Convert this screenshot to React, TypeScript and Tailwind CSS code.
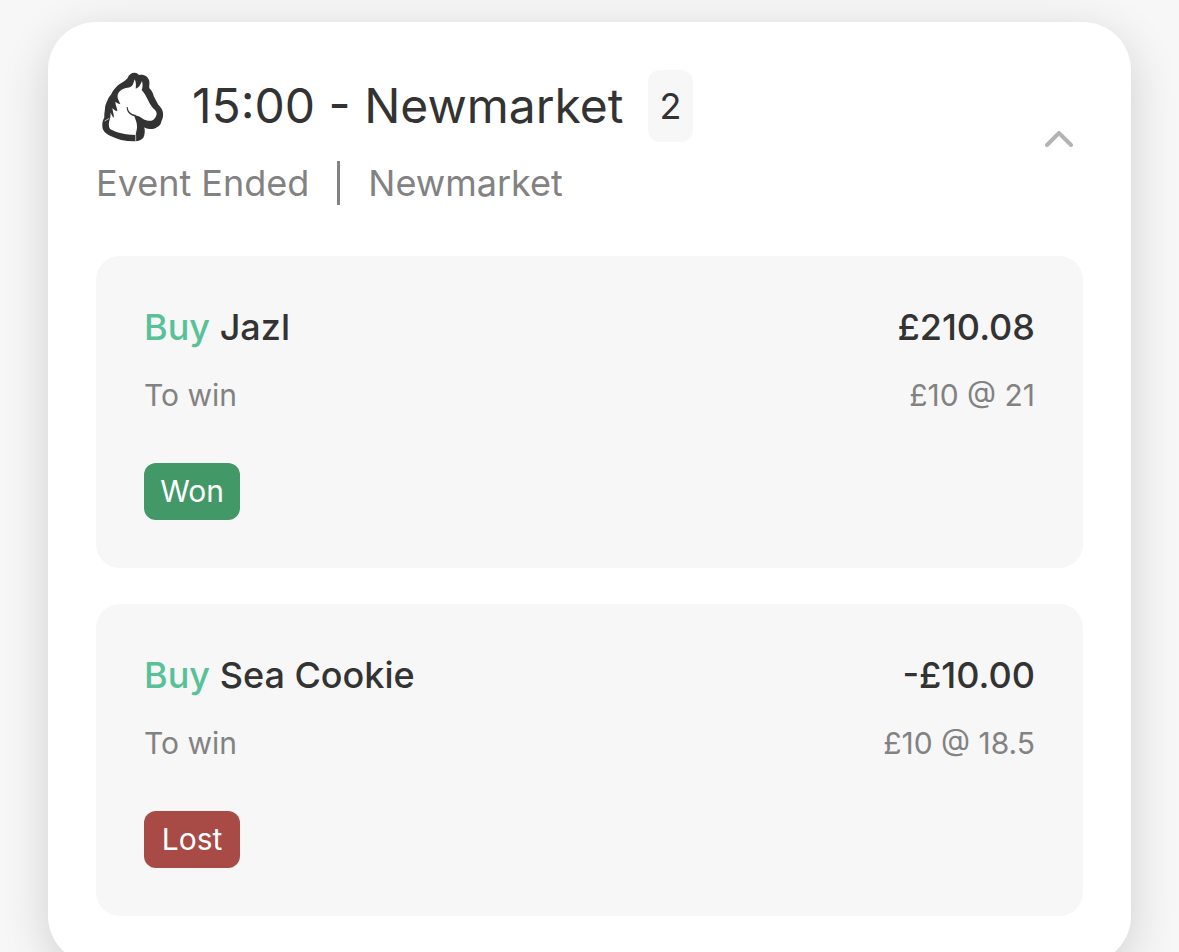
import { useState } from "react";

type Bet = {
  side: string;
  name: string;
  market: string;
  amount: string;
  stake: string;
  result: "Won" | "Lost";
};

const bets: Bet[] = [
  {
    side: "Buy",
    name: "Jazl",
    market: "To win",
    amount: "£210.08",
    stake: "£10 @ 21",
    result: "Won",
  },
  {
    side: "Buy",
    name: "Sea Cookie",
    market: "To win",
    amount: "-£10.00",
    stake: "£10 @ 18.5",
    result: "Lost",
  },
];

const resultColors = {
  Won: "bg-[#429867]",
  Lost: "bg-[#a84a46]",
};

const HorseIcon = () => (
  <svg viewBox="18 24 216 216" className="size-18 shrink-0" aria-hidden>
    {/* outline */}
    <path
      fill="#333333"
      d="M113 48C116 38 124 32 134 32C140 32 144 36 147 39C160 35 176 43 178 58C179 66 177 72 178 79C187 88 189 94 191 102C196 112 200 119 205 128C215 138 221 147 219 163C218 171 214 178 212 185C206 195 193 202 180 201C172 201 167 199 163 196C165 206 165 218 160 227C154 235 146 236 137 238C108 239 82 232 60 221C44 213 36 203 37 188C37 180 39 174 43 166C42 158 44 150 45 140C45 131 48 125 52 116C55 105 63 101 67 90C73 81 80 73 88 67C96 61 104 59 113 48Z"
    />
    {/* head and neck */}
    <path
      fill="#ffffff"
      d="M112 77C120 77 126 74 129 67C131 62 132 57 134 52C139 62 138 70 137 80C146 77 151 70 156 56C159 68 158 78 155 84C163 93 169 104 174 114C180 128 188 138 195 144C202 151 201 161 195 168C190 175 183 178 174 176C166 175 161 172 155 168C147 163 140 160 132 160C136 172 142 182 141 197C140 205 138 211 137 219C106 218 79 212 60 201C54 191 57 180 61 166C61 161 62 156 62 151C64 158 67 163 71 168C73 160 68 149 67 138C71 142 75 147 82 148C82 139 76 130 76 119C80 122 84 126 91 126C88 117 81 110 83 98C88 84 100 79 112 77Z"
    />
    {/* jaw line, thicker towards the throat */}
    <path
      fill="#333333"
      d="M110 135C110 149 118 159 134 163L140 159C124 158 114 149 113 135Z"
    />
    <path stroke="#ffffff" strokeWidth="2" d="M44 177L58 169M137 218V238" />
  </svg>
);

const BetCard = ({ bet }: { bet: Bet }) => (
  <li className="rounded-3xl bg-[#f7f7f7] p-12">
    <div className="flex justify-between text-4xl/[46px] font-medium text-[#333333]">
      <h3>
        <span className="text-[#58c197]">{bet.side}</span> {bet.name}
      </h3>
      <span>{bet.amount}</span>
    </div>
    <div className="mt-[22px] flex justify-between text-[30px]/[46px] text-[#828282]">
      <span>{bet.market}</span>
      <span>{bet.stake}</span>
    </div>
    <div className="mt-[45px] flex">
      <span
        className={`min-w-24 rounded-xl px-4 py-1.5 text-center text-[30px]/[45px] text-white ${resultColors[bet.result]}`}
      >
        {bet.result}
      </span>
    </div>
  </li>
);

export default function App() {
  const [open, setOpen] = useState(true);

  return (
    <main className="min-h-screen bg-[#f7f7f7] px-12 pt-[22px] font-['Inter',sans-serif]">
      <section className="rounded-[48px] bg-white p-12 shadow-[0_12px_48px_rgba(0,0,0,0.16)]">
        <header className="flex items-center justify-between">
          <div>
            <div className="flex items-center gap-6 text-[#333333]">
              <HorseIcon />
              <h2 className="text-5xl/18">15:00 - Newmarket</h2>
              <span className="rounded-xl bg-[#f7f7f7] px-3 text-4xl/18">
                {bets.length}
              </span>
            </div>
            <div className="mt-[18px] mb-0.5 flex items-center text-4xl/[46px] text-[#828282]">
              <span>Event Ended</span>
              <span className="mx-7 h-11 w-[3px] bg-[#828282]" />
              <span>Newmarket</span>
            </div>
          </div>
          <button
            type="button"
            aria-label="Toggle bets"
            aria-expanded={open}
            onClick={() => setOpen(!open)}
            className="flex size-12 items-center justify-center"
          >
            <svg
              viewBox="0 0 28 16"
              className={`h-4 w-7 ${open ? "" : "rotate-180"}`}
              fill="none"
              stroke="#b3b3b3"
              strokeWidth="4"
              strokeLinecap="round"
              strokeLinejoin="round"
            >
              <path d="M2 14L14 2L26 14" />
            </svg>
          </button>
        </header>

        {open && (
          <ul className="mt-12 flex flex-col gap-9">
            {bets.map((bet) => (
              <BetCard key={bet.name} bet={bet} />
            ))}
          </ul>
        )}
      </section>
    </main>
  );
}
